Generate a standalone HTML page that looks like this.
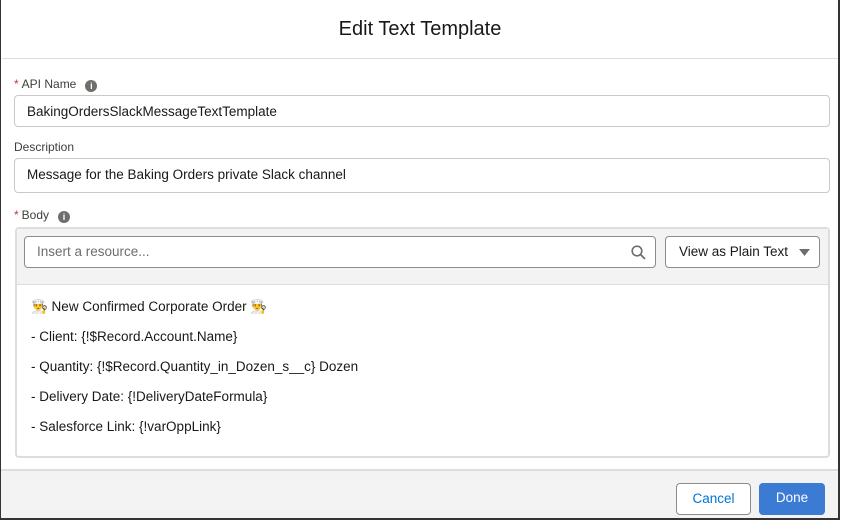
<!DOCTYPE html><html><head><style>
*{box-sizing:border-box;margin:0;padding:0}
body{width:841px;height:521px;background:#fff;font-family:"Liberation Sans",Arial,sans-serif;color:#181818;position:relative;overflow:hidden}
.frame{position:absolute;left:0;top:0;width:840px;height:520px;background:#fff;box-shadow:inset 1px 0 0 #333,inset -2px 0 0 #333,inset 0 -2px 0 #333}
.hdr{position:absolute;left:2px;right:2px;top:0;height:59px;border-bottom:1px solid #ddd;text-align:center;font-size:20px;line-height:59px;color:#181818}
.lbl{position:absolute;left:14px;font-size:12px;color:#3e3e3c}
.lbl b{color:#c23934;font-weight:normal;margin-right:3px}
.i{display:inline-block;width:12px;height:12px;border-radius:50%;background:#706e6b;color:#fff;font-size:9px;font-weight:bold;text-align:center;line-height:12px;margin-left:9px;vertical-align:-1px}
.inp{position:absolute;left:14px;width:816px;height:32px;border:1px solid #c9c9c9;border-radius:4px;font-size:13.5px;line-height:32px;padding-left:12px}
.box{position:absolute;left:15px;top:227px;width:815px;height:231px;border:2px solid #ddd;border-radius:4px;background:#fff}
.tb{position:absolute;left:0;top:0;right:0;height:56px;background:#f3f3f3;border-bottom:1px solid #ddd}
.srch{position:absolute;left:7px;top:7px;width:632px;height:32px;border:1px solid #8c8c8c;border-radius:4px;background:#fff;font-size:13.5px;color:#706e6b;line-height:30px;padding-left:12px}
.sel{position:absolute;left:648px;top:7px;width:155px;height:32px;border:1px solid #8c8c8c;border-radius:4px;background:#fff;font-size:13.5px;line-height:30px;padding-left:13px}
.ln{position:absolute;left:14px;font-size:13.5px}
.ftr{position:absolute;left:1px;right:2px;top:469px;bottom:2px;background:#f3f3f3;border-top:2px solid #ddd}
.btn{position:absolute;top:12px;height:32px;border-radius:4px;font-size:13.5px;line-height:30px;text-align:center}
</style></head><body><div class="frame">
<div class="hdr">Edit Text Template</div>
<div class="lbl" style="top:77px"><b>*</b>API Name<span class="i">i</span></div>
<div class="inp" style="top:95px">BakingOrdersSlackMessageTextTemplate</div>
<div class="lbl" style="top:140px">Description</div>
<div class="inp" style="top:158px;height:35px">Message for the Baking Orders private Slack channel</div>
<div class="lbl" style="top:208px"><b>*</b>Body<span class="i">i</span></div>
<div class="box">
<div class="tb">
<div class="srch">Insert a resource...
<svg style="position:absolute;right:9px;top:8px" width="15" height="15" viewBox="0 0 15 15"><circle cx="6" cy="6" r="4.8" fill="none" stroke="#706e6b" stroke-width="1.6"/><path d="M9.5 9.5L14 14" stroke="#706e6b" stroke-width="1.8"/></svg></div>
<div class="sel">View as Plain Text<svg style="position:absolute;right:9px;top:12px" width="11" height="7"><path d="M0 0H11L5.5 7Z" fill="#706e6b"/></svg></div>
</div>
<div class="ln" style="top:70px">👨‍🍳 New Confirmed Corporate Order 👨‍🍳</div>
<div class="ln" style="top:100px">- Client: {!$Record.Account.Name}</div>
<div class="ln" style="top:130px">- Quantity: {!$Record.Quantity_in_Dozen_s__c} Dozen</div>
<div class="ln" style="top:160px">- Delivery Date: {!DeliveryDateFormula}</div>
<div class="ln" style="top:190px">- Salesforce Link: {!varOppLink}</div>
</div>
<div class="ftr">
<div class="btn" style="left:675px;width:75px;border:1px solid #8c8c8c;background:#fff;color:#0176d3">Cancel</div>
<div class="btn" style="left:758px;width:66px;background:#3b7bd4;color:#fff">Done</div>
</div>
</div></body></html>
